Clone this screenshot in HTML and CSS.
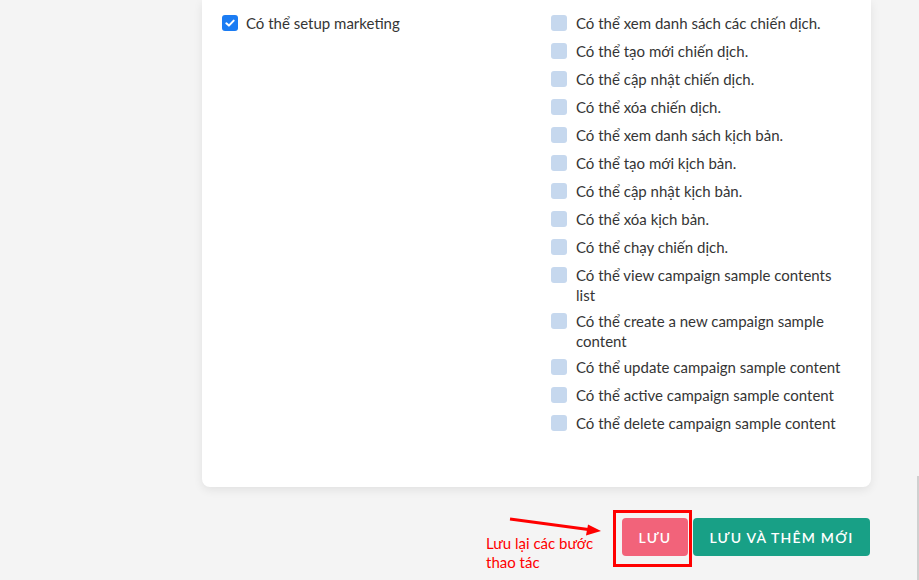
FILE: index.html
```html
<!DOCTYPE html>
<html lang="vi">
<head>
<meta charset="utf-8">
<title>Phân quyền</title>
<link rel="stylesheet" href="styles.css">
</head>
<body>
<div class="page">
  <div class="card">
    <div class="perm-grid">
      <div class="col-left">
        <label class="check-row">
          <span class="box checked"><svg viewBox="0 0 16 16" width="16" height="16"><path d="M4.3 8.3 L6.9 10.6 L11.7 5.6" fill="none" stroke="#fff" stroke-width="2" stroke-linecap="round" stroke-linejoin="round"/></svg></span>
          <span class="label">Có thể setup marketing</span>
        </label>
      </div>
      <div class="col-right">
        <label class="check-row"><span class="box"></span><span class="label">Có thể xem danh sách các chiến dịch.</span></label>
        <label class="check-row"><span class="box"></span><span class="label">Có thể tạo mới chiến dịch.</span></label>
        <label class="check-row"><span class="box"></span><span class="label">Có thể cập nhật chiến dịch.</span></label>
        <label class="check-row"><span class="box"></span><span class="label">Có thể xóa chiến dịch.</span></label>
        <label class="check-row"><span class="box"></span><span class="label">Có thể xem danh sách kịch bản.</span></label>
        <label class="check-row"><span class="box"></span><span class="label">Có thể tạo mới kịch bản.</span></label>
        <label class="check-row"><span class="box"></span><span class="label">Có thể cập nhật kịch bản.</span></label>
        <label class="check-row"><span class="box"></span><span class="label">Có thể xóa kịch bản.</span></label>
        <label class="check-row"><span class="box"></span><span class="label">Có thể chạy chiến dịch.</span></label>
        <label class="check-row"><span class="box"></span><span class="label">Có thể view campaign sample contents list</span></label>
        <label class="check-row"><span class="box"></span><span class="label">Có thể create a new campaign sample content</span></label>
        <label class="check-row"><span class="box"></span><span class="label">Có thể update campaign sample content</span></label>
        <label class="check-row"><span class="box"></span><span class="label">Có thể active campaign sample content</span></label>
        <label class="check-row"><span class="box"></span><span class="label">Có thể delete campaign sample content</span></label>
      </div>
    </div>
  </div>

  <div class="actions">
    <div class="annotation">
      <svg class="arrow" width="100" height="20" viewBox="0 0 100 20"><line x1="2" y1="2" x2="84" y2="13" stroke="#f00" stroke-width="3"/><polygon points="93,14 80,7.5 78,18.5" fill="#f00"/></svg>
      <div class="note">Lưu lại các bước<br>thao tác</div>
    </div>
    <div class="save-wrap">
      <button class="btn btn-save">LƯU</button>
      <span class="highlight"></span>
    </div>
    <button class="btn btn-save-new">LƯU VÀ THÊM MỚI</button>
  </div>
  <span class="scroll-thumb"></span>
</div>
</body>
</html>
```

FILE: styles.css
```css
html, body {
  margin: 0;
  padding: 0;
}
body {
  background: #f4f4f4;
  font-family: "Lato", "Open Sans", "Liberation Sans", sans-serif;
  color: #353535;
  width: 919px;
  height: 580px;
  overflow: hidden;
}
.page {
  position: relative;
  height: 580px;
}
.card {
  margin-left: 202px;
  width: 669px;
  height: 487px;
  box-sizing: border-box;
  background: #fff;
  border-radius: 0 0 8px 8px;
  box-shadow: 0 3px 10px rgba(0, 0, 0, 0.08);
  padding: 14px 20px 0 20px;
}
.perm-grid {
  display: grid;
  grid-template-columns: 329px 300px;
}
.col-right {
  display: flex;
  flex-direction: column;
  gap: 7px;
}
.check-row {
  display: flex;
  align-items: flex-start;
  font-size: 15px;
  line-height: 19.5px;
  min-height: 21px;
}
.col-left .box {
  margin-right: 8px;
}
.box {
  flex: none;
  width: 16px;
  height: 16px;
  border-radius: 3px;
  background: #c6d8ee;
  margin-top: 1px;
  margin-right: 9px;
  display: block;
}
.box svg { display: block; }
.box.checked {
  background: #1b7cf3;
}
.label {
  flex: 1;
}
.actions {
  display: flex;
  justify-content: flex-end;
  align-items: center;
  width: 870px;
  margin-top: 31px;
  gap: 5px;
  position: relative;
}
.btn {
  border: none;
  height: 38px;
  border-radius: 4px;
  color: #fff;
  font-family: "Lato", "Open Sans", sans-serif;
  font-weight: 600;
  font-size: 14px;
  letter-spacing: 1.2px;
  cursor: pointer;
}
.save-wrap {
  position: relative;
}
.btn-save {
  background: #f2637a;
  width: 66px;
  display: block;
}
.btn-save-new {
  background: #18a086;
  width: 177px;
}
.highlight {
  position: absolute;
  left: -9px;
  top: -8px;
  width: 73px;
  height: 51px;
  border: 3px solid #f00;
  pointer-events: none;
}
.annotation {
  position: absolute;
  left: 486px;
  top: 0;
}
.arrow {
  position: absolute;
  left: 22px;
  top: -1px;
}
.note {
  position: absolute;
  left: 0;
  top: 16px;
  width: 140px;
  color: #f00;
  font-size: 15px;
  line-height: 19px;
}
.scroll-thumb {
  position: absolute;
  right: 0;
  top: 476px;
  width: 2px;
  height: 104px;
  background: #cfcfcf;
}
```
